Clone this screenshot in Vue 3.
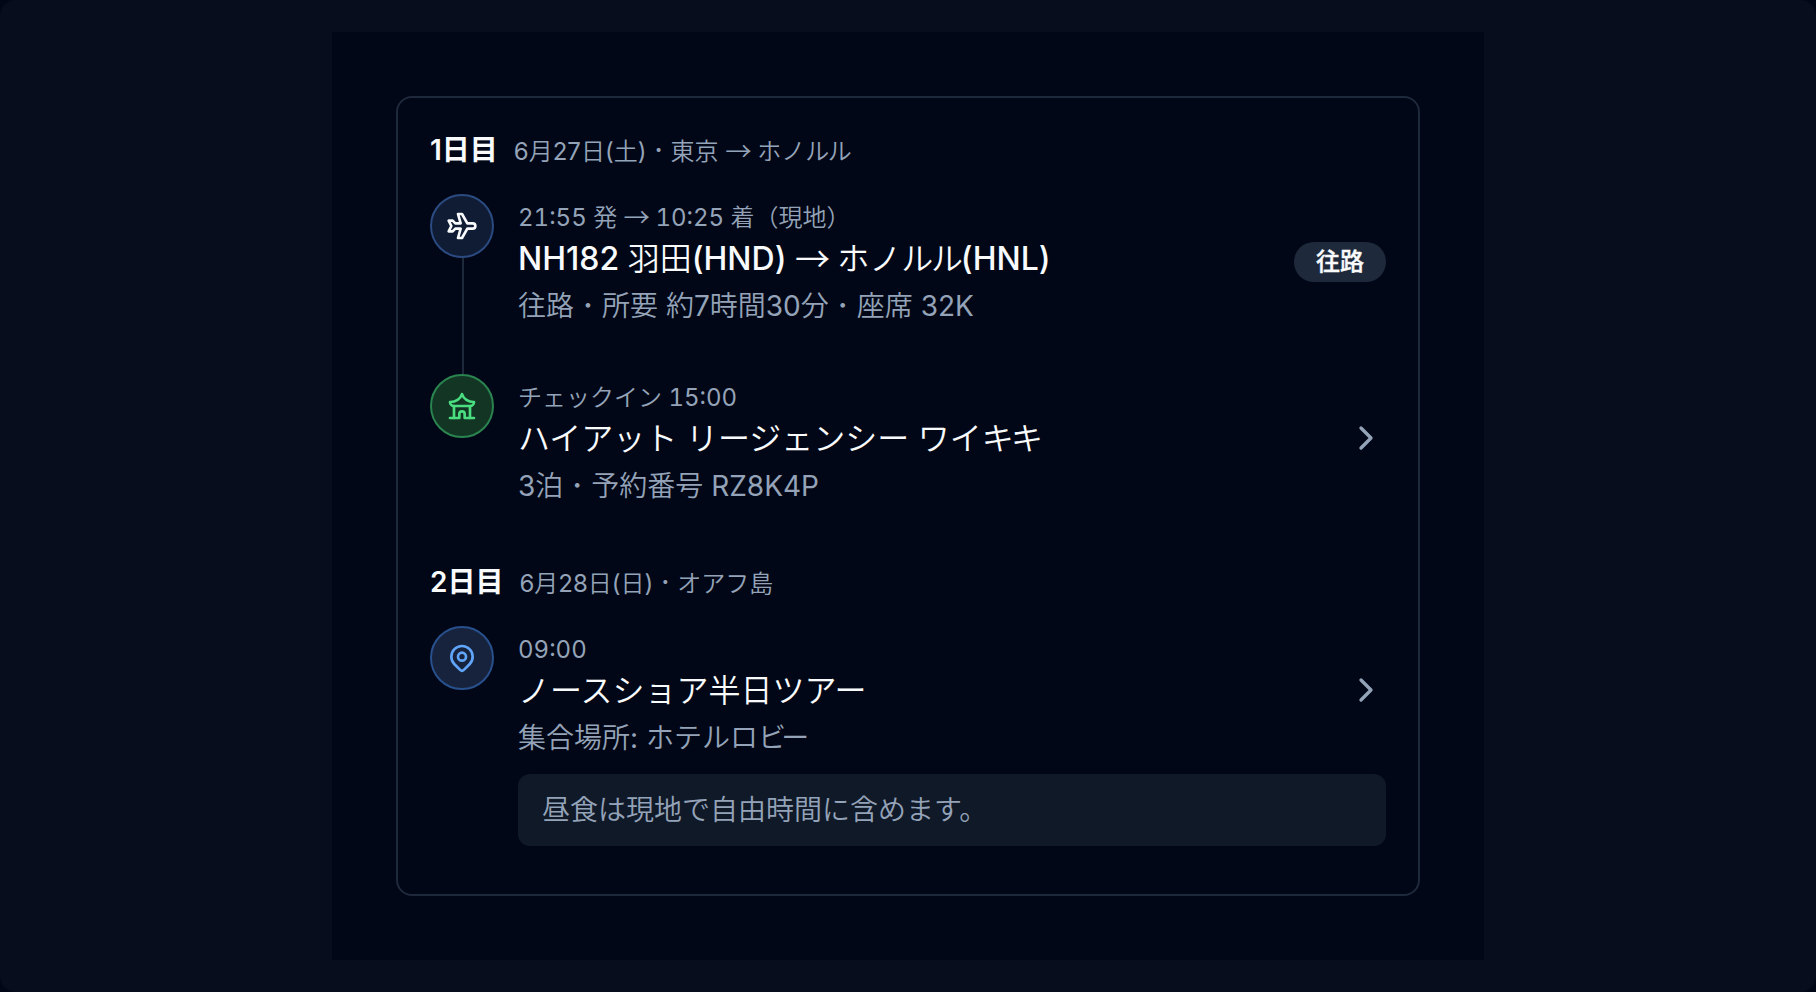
<template>
  <div class="stage">
    <div class="preview">
      <div class="card">
        <section v-for="day in days" :key="day.label" class="day">
          <header class="day-header">
            <h3 class="day-label">{{ day.label }}</h3>
            <p class="day-date">
              <span v-for="(run, i) in split(day.date)" :key="i" :class="run.kind">{{ run.text }}</span>
            </p>
          </header>
          <ol class="items">
            <li v-for="item in day.items" :key="item.title" class="item">
              <div class="rail">
                <span class="marker" :class="item.type">
                  <svg viewBox="0 0 24 24" class="marker-icon">
                    <path v-for="d in icons[item.type]" :key="d" :d="d" />
                  </svg>
                </span>
                <span class="line"></span>
              </div>
              <div class="body">
                <div class="row">
                  <div class="texts">
                    <p v-for="field in ['time', 'title', 'meta']" :key="field" :class="field">
                      <span v-for="(run, i) in split(item[field])" :key="i" :class="run.kind">{{ run.text }}</span>
                    </p>
                  </div>
                  <span v-if="item.badge" class="badge">{{ item.badge }}</span>
                  <svg v-else viewBox="0 0 24 24" class="chevron"><path d="m9 18 6-6-6-6" /></svg>
                </div>
                <p v-if="item.note" class="note">
                  <span class="kana">{{ item.note }}</span>
                </p>
              </div>
            </li>
          </ol>
        </section>
      </div>
    </div>
  </div>
</template>

<script setup>
const icons = {
  flight: [
    'M16 10h4a2 2 0 0 1 0 4h-4l-4 7h-3l2 -7h-4l-2 2h-3l2 -4l-2 -4h3l2 2h4l-2 -7h3z',
  ],
  hotel: [
    'M3 21h7v-3a2 2 0 0 1 4 0v3h7',
    'M6 21v-9',
    'M18 21v-9',
    'M6 12h12a3 3 0 0 0 3 -3a9 8 0 0 1 -9 -6a9 8 0 0 1 -9 6a3 3 0 0 0 3 3',
  ],
  place: [
    'M9 11a3 3 0 1 0 6 0a3 3 0 0 0 -6 0',
    'M17.657 16.657l-4.243 4.243a2 2 0 0 1 -2.827 0l-4.244 -4.243a8 8 0 1 1 11.314 0z',
  ],
}

const days = [
  {
    label: '1日目',
    date: '6月27日(土)・東京 → ホノルル',
    items: [
      {
        type: 'flight',
        time: '21:55 発 → 10:25 着（現地）',
        title: 'NH182 羽田(HND) → ホノルル(HNL)',
        meta: '往路・所要 約7時間30分・座席 32K',
        badge: '往路',
      },
      {
        type: 'hotel',
        time: 'チェックイン 15:00',
        title: 'ハイアット リージェンシー ワイキキ',
        meta: '3泊・予約番号 RZ8K4P',
      },
    ],
  },
  {
    label: '2日目',
    date: '6月28日(日)・オアフ島',
    items: [
      {
        type: 'place',
        time: '09:00',
        title: 'ノースショア半日ツアー',
        meta: '集合場所: ホテルロビー',
        note: '昼食は現地で自由時間に含めます。',
      },
    ],
  },
]

const kinds = {
  ビ: 'kana kern-bi',
  キ: 'kana kern-ki',
  ル: 'kana kern-ru',
  '→': 'kana arrow',
  '・': 'kana dot',
}

// Japanese runs are set lighter than the Latin ones,
// and a few kana are pulled closer to the next one
const split = (text) =>
  text
    .split(/([\x20-\x7e]+|→|・|ビ(?=ー)|キ(?=キ)|ル(?=ル))/)
    .filter(Boolean)
    .map((t) => ({
      text: t,
      kind: t.charCodeAt(0) < 127 ? 'latin' : kinds[t] || 'kana',
    }))
</script>

<style>
body {
  margin: 0;
  background: #010716;
}
</style>

<style scoped>
.stage {
  box-sizing: border-box;
  height: 992px;
  padding: 32px 332px;
  border-radius: 16px;
  background: #070d1c;
  font-family: Inter, 'Noto Sans CJK JP', sans-serif;
  color: #f8fafc;
}
.preview {
  box-sizing: border-box;
  height: 928px;
  padding: 64px;
  background: #010716;
}
.card {
  box-sizing: border-box;
  height: 800px;
  padding: 32px;
  border: 2px solid #1e293b;
  border-radius: 16px;
}
h3,
p,
ol {
  margin: 0;
  padding: 0;
}
.day + .day {
  margin-top: 8px;
}
.day-header {
  display: flex;
  align-items: baseline;
  gap: 16px;
  height: 40px;
  margin-bottom: 24px;
}
.day-label {
  font-size: 28px;
  line-height: 40px;
  font-weight: 600;
}
.day-date {
  font-size: 24px;
  line-height: 32px;
  color: #94a3b8;
}
.kana {
  font-family: 'Noto Sans CJK JP', sans-serif;
  font-weight: 350;
  line-height: 1;
}
.kern-ki {
  letter-spacing: -0.09em;
}
.kern-bi {
  letter-spacing: -0.17em;
}
.kern-ru {
  letter-spacing: -0.07em;
}
.arrow {
  font-size: 1.1em;
  line-height: 0.8;
  letter-spacing: -0.04em;
  vertical-align: -0.045em;
}
.dot {
  display: inline-block;
  width: 1.25em;
  font-size: 0.8em;
  vertical-align: 0.1em;
  text-align: center;
}
.items {
  list-style: none;
}
.item {
  display: flex;
  gap: 24px;
}
.rail {
  display: flex;
  flex-direction: column;
  align-items: center;
  width: 64px;
}
.marker {
  box-sizing: border-box;
  display: flex;
  align-items: center;
  justify-content: center;
  width: 64px;
  height: 64px;
  border: 2px solid;
  border-radius: 50%;
}
.flight {
  color: #f8fafc;
  background: #0f1c34;
  border-color: #2b4a80;
}
.hotel {
  color: #4ade80;
  background: #123524;
  border-color: #2a8450;
}
.place {
  color: #60a5fa;
  background: #17223d;
  border-color: #28508d;
}
.marker-icon {
  width: 32px;
  height: 32px;
}
svg {
  fill: none;
  stroke: currentColor;
  stroke-width: 2;
  stroke-linecap: round;
  stroke-linejoin: round;
}
.line {
  flex: 1;
  width: 2px;
  margin-left: 2px;
  background: #1e293b;
}
.item:last-child .line {
  display: none;
}
.body {
  flex: 1;
  padding: 8px 0 48px;
}
.row {
  display: flex;
  align-items: center;
  justify-content: space-between;
}
.time {
  font-size: 24px;
  line-height: 32px;
  font-variant-numeric: tabular-nums;
  color: #94a3b8;
}
.title {
  margin: 3px 0 5px;
  font-size: 32px;
  line-height: 44px;
  font-weight: 500;
}
.meta {
  font-size: 28px;
  line-height: 40px;
  color: #94a3b8;
}
.badge {
  box-sizing: border-box;
  height: 40px;
  padding: 2px 22px;
  margin-bottom: 4px;
  border-radius: 20px;
  background: #1e293b;
  font-size: 24px;
  line-height: 36px;
  font-weight: 500;
  -webkit-text-stroke: 0.4px;
}
.chevron {
  width: 40px;
  height: 40px;
  margin-bottom: 12px;
  color: #94a3b8;
}
.note {
  margin-top: 16px;
  padding: 16px 24px;
  border-radius: 12px;
  background: #101928;
  font-size: 28px;
  line-height: 40px;
  color: #94a3b8;
}
</style>
